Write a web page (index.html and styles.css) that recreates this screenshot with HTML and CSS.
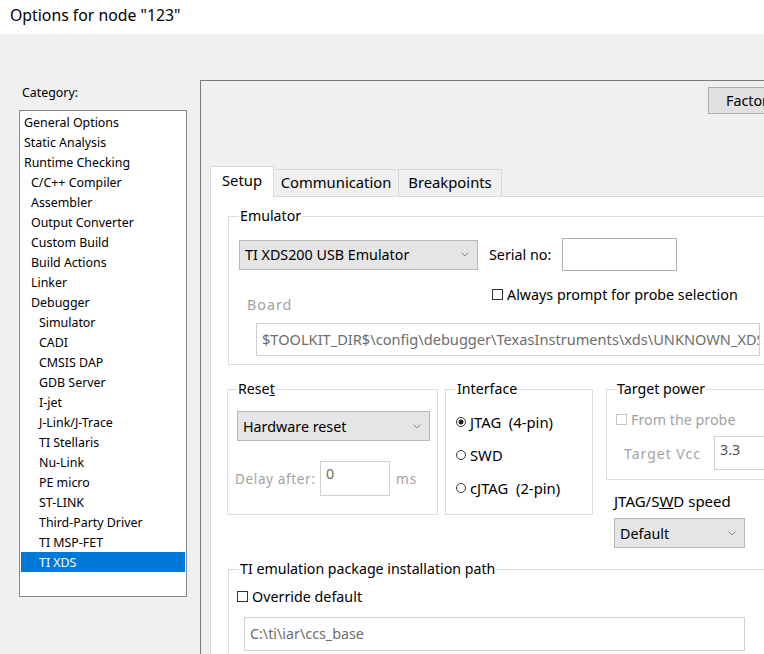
FILE: index.html
```html
<!DOCTYPE html>
<html>
<head>
<meta charset="utf-8">
<link rel="stylesheet" href="styles.css">
</head>
<body>
<div class="title">Options for node "123"</div>
<div class="main">
  <div class="left">
    <div class="cat">Category:</div>
    <ul class="list">
      <li>General Options</li>
      <li>Static Analysis</li>
      <li>Runtime Checking</li>
      <li class="l1">C/C++ Compiler</li>
      <li class="l1">Assembler</li>
      <li class="l1">Output Converter</li>
      <li class="l1">Custom Build</li>
      <li class="l1">Build Actions</li>
      <li class="l1">Linker</li>
      <li class="l1">Debugger</li>
      <li class="l2">Simulator</li>
      <li class="l2">CADI</li>
      <li class="l2">CMSIS DAP</li>
      <li class="l2">GDB Server</li>
      <li class="l2">I-jet</li>
      <li class="l2">J-Link/J-Trace</li>
      <li class="l2">TI Stellaris</li>
      <li class="l2">Nu-Link</li>
      <li class="l2">PE micro</li>
      <li class="l2">ST-LINK</li>
      <li class="l2">Third-Party Driver</li>
      <li class="l2">TI MSP-FET</li>
      <li class="l2 sel">TI XDS</li>
    </ul>
  </div>
  <div class="panel">
    <div class="ptop"><div class="factory">Factory Settings</div></div>
    <div class="tabs">
      <div class="tab active t1">Setup</div>
      <div class="tab t2">Communication</div>
      <div class="tab t3">Breakpoints</div>
    </div>
    <div class="page">
      <fieldset class="emu">
        <legend>Emulator</legend>
        <div class="emu-row1">
          <div class="combo c-emu"><span>TI XDS200 USB Emulator</span><svg width="8" height="5" viewBox="0 0 8 5"><polyline points="0.5,0.5 4,4 7.5,0.5" fill="none" stroke="#8a8a8a" stroke-width="1"/></svg></div>
          <div class="serial-label">Serial no:</div>
          <div class="input serial"></div>
        </div>
        <div class="emu-row2">
          <div class="board-wrap"><span class="dis spaced">Board</span></div>
          <div class="check prompt"><span class="cb"></span><span>Always prompt for probe selection</span></div>
        </div>
        <div class="input board">$TOOLKIT_DIR$\config\debugger\TexasInstruments\xds\UNKNOWN_XDS.board</div>
      </fieldset>

      <div class="row2">
        <fieldset class="reset">
          <legend>Rese<u>t</u></legend>
          <div class="combo c-reset"><span>Hardware reset</span><svg width="8" height="5" viewBox="0 0 8 5"><polyline points="0.5,0.5 4,4 7.5,0.5" fill="none" stroke="#8a8a8a" stroke-width="1"/></svg></div>
          <div class="delay">
            <span class="dis spaced delay-label">Delay after:</span>
            <div class="input delay-in">0</div>
            <span class="dis spaced ms">ms</span>
          </div>
        </fieldset>
        <fieldset class="iface">
          <legend>Interface</legend>
          <div class="radio-row"><span class="radio on"></span><span>JTAG&nbsp;&nbsp;(4-pin)</span></div>
          <div class="radio-row"><span class="radio"></span><span>SWD</span></div>
          <div class="radio-row"><span class="radio"></span><span>cJTAG&nbsp;&nbsp;(2-pin)</span></div>
        </fieldset>
        <div class="rcol">
          <fieldset class="power">
            <legend>Target power</legend>
            <div class="check probe"><span class="cb off"></span><span class="dis">From the probe</span></div>
            <div class="vcc">
              <span class="dis spaced vcc-label">Target Vcc</span>
              <div class="input vcc-in">3.3</div>
            </div>
          </fieldset>
          <div class="speed-label">JTAG/S<u>W</u>D speed</div>
          <div class="combo c-speed"><span>Default</span><svg width="8" height="5" viewBox="0 0 8 5"><polyline points="0.5,0.5 4,4 7.5,0.5" fill="none" stroke="#8a8a8a" stroke-width="1"/></svg></div>
        </div>
      </div>

      <fieldset class="ti">
        <legend>TI emulation package installation path</legend>
        <div class="check override"><span class="cb"></span><span>Override default</span></div>
        <div class="input tipath">C:\ti\iar\ccs_base</div>
      </fieldset>
    </div>
  </div>
</div>
</body>
</html>
```
FILE: styles.css
```css
html, body {
  margin: 0;
  padding: 0;
}
body {
  width: 764px;
  height: 654px;
  overflow: hidden;
  background: #f0f0f0;
  font-family: "Noto Sans", "Open Sans", sans-serif;
  color: #000;
  font-size: 14.3px;
}
.title {
  height: 34px;
  background: #fff;
  font-size: 15.8px;
  line-height: 31px;
  padding-left: 10px;
  box-sizing: border-box;
}
.main {
  display: flex;
  height: 620px;
}
.left {
  width: 200px;
  flex: none;
  padding-left: 19px;
  box-sizing: border-box;
}
.cat {
  font-size: 12.4px;
  line-height: 20px;
  margin: 49px 0 7px 3px;
}
.list {
  width: 168px;
  height: 487px;
  box-sizing: border-box;
  border: 1px solid #828790;
  background: #fff;
  padding: 1px;
  margin: 0;
  list-style: none;
  font-size: 12.4px;
}
.list li {
  height: 20px;
  line-height: 21px;
  padding-left: 3px;
  white-space: nowrap;
}
.list li.l1 { padding-left: 10px; }
.list li.l2 { padding-left: 18px; }
.list li.sel { background: #0078d7; color: #fff; }

.panel {
  flex: 1;
  min-width: 0;
  margin-top: 46px;
  border-top: 1px solid #7a7a7a;
  border-left: 1px solid #7a7a7a;
}
.ptop {
  height: 85px;
  display: flex;
  align-items: flex-start;
  padding-left: 507px;
}
.factory {
  flex: none;
  margin-top: 6px;
  width: 130px;
  height: 27px;
  box-sizing: border-box;
  border: 1px solid #adadad;
  background: #e1e1e1;
  padding-left: 17px;
  line-height: 25px;
  font-size: 14.3px;
  white-space: nowrap;
}
.tabs {
  display: flex;
  align-items: flex-end;
  height: 30px;
  padding-left: 9px;
}
.tab {
  height: 27px;
  box-sizing: border-box;
  border: 1px solid #d9d9d9;
  border-bottom: none;
  background: #f0f0f0;
  font-size: 14.8px;
  line-height: 24px;
  text-align: center;
  white-space: nowrap;
}
.tab.active {
  height: 31px;
  margin-bottom: -1px;
  background: #fff;
  position: relative;
  z-index: 1;
  line-height: 26px;
}
.t1 { width: 64px; }
.t2 { width: 126px; margin-left: -1px; }
.t3 { width: 104px; margin-left: -1px; }

.page {
  margin-left: 9px;
  height: 460px;
  background: #fff;
  border-top: 1px solid #d9d9d9;
  border-left: 1px solid #d9d9d9;
  padding: 9px 0 0 17px;
  box-sizing: border-box;
}
fieldset {
  margin: 0;
  border: 1px solid #dcdcdc;
  min-width: 0;
  box-sizing: border-box;
}
legend {
  padding: 0 1px;
  font-size: 14.2px;
  line-height: 20px;
}
.emu {
  width: 560px;
  padding: 12px 0 8px 10px;
}
.emu-row1 {
  display: flex;
  align-items: center;
  height: 33px;
}
.combo {
  flex: none;
  height: 30px;
  box-sizing: border-box;
  border: 1px solid #b8b8b8;
  background: #e5e5e5;
  display: flex;
  align-items: center;
  justify-content: space-between;
  padding: 0 8px 0 5px;
  font-size: 14.3px;
  white-space: nowrap;
}
.c-emu { width: 239px; }
.serial-label {
  margin-left: 11px;
  width: 73px;
  font-size: 14.3px;
  white-space: nowrap;
}
.input {
  flex: none;
  box-sizing: border-box;
  border: 1px solid #d0d0d0;
  background: #fff;
  white-space: nowrap;
  overflow: hidden;
}
.serial {
  width: 115px;
  height: 33px;
  border-color: #b0b0b0;
}
.emu-row2 {
  display: flex;
  height: 52px;
}
.board-wrap {
  width: 253px;
  padding: 24px 0 0 8px;
  box-sizing: border-box;
  line-height: 20px;
  font-size: 14.3px;
}
.dis { color: #a3a3a3; }
.spaced { letter-spacing: 1px; }
.check {
  display: flex;
  align-items: center;
  height: 20px;
  font-size: 14.3px;
  white-space: nowrap;
}
.cb {
  width: 11px;
  height: 11px;
  box-sizing: border-box;
  border: 1px solid #333;
  margin-right: 4px;
  flex: none;
}
.cb.off { border-color: #c6c6c6; }
.prompt { margin-top: 13px; }
.board {
  margin-left: 17px;
  width: 504px;
  height: 33px;
  padding-left: 5px;
  line-height: 31px;
  font-size: 14.6px;
  color: #6d6d6d;
}
.row2 {
  display: flex;
  align-items: flex-start;
  margin-top: 14px;
}
.reset {
  width: 211px;
  flex: none;
  margin-left: -1px;
  padding: 12px 0 18px 9px;
}
.c-reset { width: 193px; }
.delay {
  display: flex;
  align-items: center;
  height: 35px;
  margin-top: 20px;
  margin-left: -2px;
  font-size: 13.6px;
}
.delay-label {
  width: 85px;
  white-space: nowrap;
  letter-spacing: 0.6px;
}
.delay-in {
  width: 70px;
  height: 35px;
  padding: 2px 5px;
  line-height: 20px;
  color: #6d6d6d;
  font-size: 14.3px;
}
.ms { margin-left: 6px; }
.iface {
  width: 148px;
  flex: none;
  margin-left: 7px;
  padding: 6px 0 10px 10px;
}
.radio-row {
  display: flex;
  align-items: center;
  height: 33px;
  font-size: 14.8px;
  white-space: nowrap;
}
.radio {
  width: 10px;
  height: 10px;
  box-sizing: border-box;
  border: 1px solid #333;
  border-radius: 50%;
  margin-right: 4px;
  flex: none;
}
.radio.on {
  background: radial-gradient(circle, #222 0, #222 2.2px, #fff 2.8px);
}
.rcol {
  margin-left: 13px;
  display: flex;
  flex-direction: column;
}
.power {
  width: 200px;
  padding: 10px 0 9px 9px;
}
.vcc {
  display: flex;
  align-items: center;
  margin-top: 7px;
  height: 34px;
  font-size: 14px;
}
.vcc-label {
  margin-left: 8px;
  width: 90px;
  white-space: nowrap;
}
.vcc-in {
  width: 60px;
  height: 34px;
  padding: 3px 5px;
  line-height: 20px;
  font-size: 14.3px;
  color: #555;
}
.speed-label {
  margin: 11px 0 0 8px;
  line-height: 20px;
  font-size: 15px;
  white-space: nowrap;
}
.c-speed {
  width: 131px;
  margin: 7px 0 0 8px;
}
.ti {
  width: 560px;
  margin-top: 11px;
  padding: 7px 0 10px 8px;
}
.ti legend { margin-left: 2px; }
.tipath {
  margin: 11px 0 0 7px;
  width: 501px;
  height: 34px;
  padding-left: 5px;
  line-height: 32px;
  font-size: 14.3px;
  color: #6d6d6d;
}
```
